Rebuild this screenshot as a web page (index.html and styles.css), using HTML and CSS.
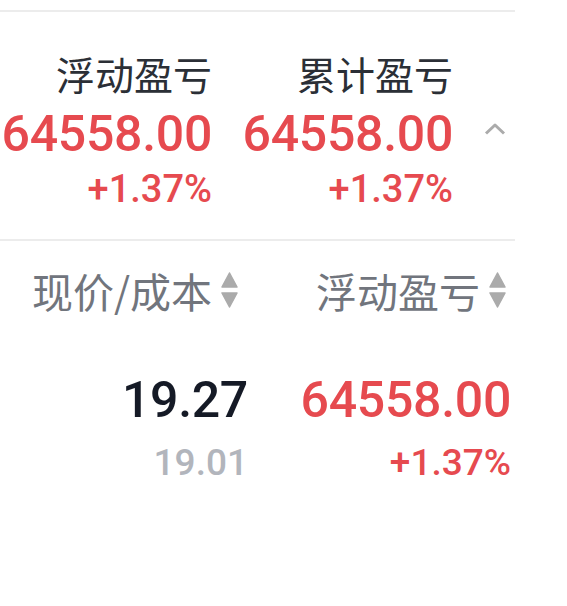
FILE: index.html
```html
<!DOCTYPE html>
<html lang="zh-CN">
<head>
    <meta charset="UTF-8">
    <meta name="viewport" content="width=device-width, initial-scale=1.0">
    <title>持仓盈亏</title>
    <link rel="stylesheet" href="styles.css">
</head>
<body>
    <div class="panel">
        <div class="summary">
            <div class="summary-col">
                <div class="summary-title">浮动盈亏</div>
                <div class="num-big up">64558.00</div>
                <div class="num-pct up">+1.37%</div>
            </div>
            <div class="summary-col">
                <div class="summary-title">累计盈亏</div>
                <div class="num-big up">64558.00</div>
                <div class="num-pct up">+1.37%</div>
            </div>
            <div class="summary-toggle">
                <svg width="22" height="12" viewBox="0 0 22 12">
                    <path d="M2 10.5 L11 2 L20 10.5" fill="none" stroke="#ababab" stroke-width="3" stroke-linejoin="round"/>
                </svg>
            </div>
        </div>

        <div class="table">
            <div class="table-head">
                <div class="th th-price">现价/成本
                    <span class="sort">
                        <svg width="17" height="37" viewBox="0 0 17 37">
                            <path d="M8.5 1 L16 15 L1 15 Z" fill="#ababab" stroke="#ababab" stroke-width="1.5" stroke-linejoin="round"/>
                            <path d="M1 21 L16 21 L8.5 35 Z" fill="#ababab" stroke="#ababab" stroke-width="1.5" stroke-linejoin="round"/>
                        </svg>
                    </span>
                </div>
                <div class="th th-profit">浮动盈亏
                    <span class="sort">
                        <svg width="17" height="37" viewBox="0 0 17 37">
                            <path d="M8.5 1 L16 15 L1 15 Z" fill="#ababab" stroke="#ababab" stroke-width="1.5" stroke-linejoin="round"/>
                            <path d="M1 21 L16 21 L8.5 35 Z" fill="#ababab" stroke="#ababab" stroke-width="1.5" stroke-linejoin="round"/>
                        </svg>
                    </span>
                </div>
            </div>
            <div class="table-row">
                <div class="td">
                    <div class="num-big">19.27</div>
                    <div class="num-sub muted">19.01</div>
                </div>
                <div class="td">
                    <div class="num-big up">64558.00</div>
                    <div class="num-sub up">+1.37%</div>
                </div>
            </div>
        </div>
    </div>
</body>
</html>
```

FILE: styles.css
```css
body {
    margin: 0;
    background: #fff;
    font-family: Roboto, "Noto Sans CJK SC", sans-serif;
    color: #2b2f36;
}
.panel {
    width: 515px;
    padding-top: 10px;
}
.summary {
    display: grid;
    grid-template-columns: 212px 241px 1fr;
    border-top: 2px solid #ececec;
    border-bottom: 2px solid #ececec;
    padding: 38px 0 27px;
}
.summary-col {
    text-align: right;
}
.summary-title {
    font-family: "Noto Sans CJK SC", sans-serif;
    font-size: 39px;
    line-height: 46px;
    color: #2b2f36;
}
.num-big {
    font-size: 50px;
    font-weight: 500;
    line-height: 56px;
    letter-spacing: -0.3px;
    color: #151a26;
}
.summary .num-big {
    margin-top: 10px;
}
.num-pct {
    font-size: 38px;
    font-weight: 500;
    line-height: 46px;
    margin-top: 4px;
}
.up {
    color: #e64a4f;
}
.muted {
    color: #b2b5bc;
}
.summary-toggle {
    padding: 70px 0 0 31px;
}
.table-head {
    display: grid;
    grid-template-columns: 248px 263px;
    padding-top: 25px;
}
.th {
    display: flex;
    justify-content: flex-end;
    align-items: center;
    font-family: "Noto Sans CJK SC", sans-serif;
    font-size: 41px;
    line-height: 48px;
    color: #71757d;
}
.th-price {
    padding-right: 10px;
}
.th-profit {
    padding-right: 5px;
}
.sort {
    display: flex;
    margin-left: 9px;
}
.table-row {
    display: grid;
    grid-template-columns: 248px 263px;
    padding-top: 58px;
}
.td {
    text-align: right;
}
.num-sub {
    font-size: 37px;
    font-weight: 500;
    line-height: 46px;
    margin-top: 12px;
}
```
